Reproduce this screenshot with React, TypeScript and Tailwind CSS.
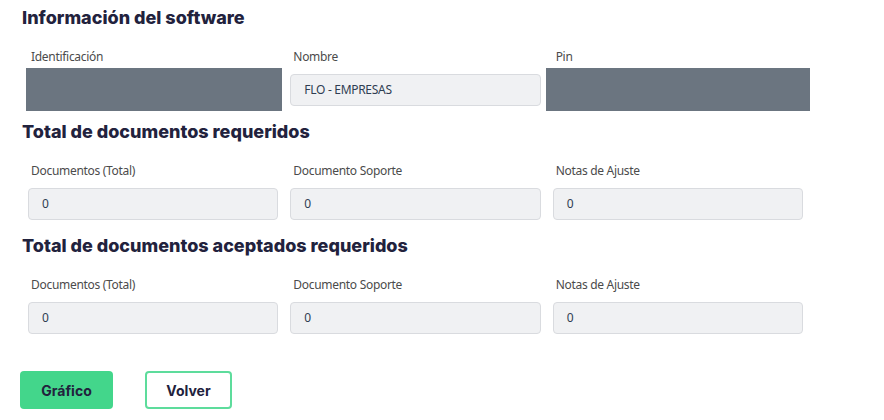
const labelCls = "block pl-[3px] pt-[2px] text-[12px] leading-[18px] tracking-[-0.3px] text-[#4b4b4b] mb-[8px]";
const inputCls =
  "h-[32px] w-full rounded-[4px] border border-[#d9dbdf] bg-[#f0f1f3] px-[13px] flex items-center text-[12px] tracking-[-0.3px] text-[#2f3d52]";

function Field({ label, value, redact }: { label: string; value?: string; redact?: "left" | "right" }) {
  return (
    <div>
      <span className={labelCls}>{label}</span>
      <div className="relative">
        <div className={inputCls}>{value}</div>
        {redact === "left" && (
          <div className="absolute left-[-2px] right-[-4px] top-[-6px] bottom-[-5px] bg-[#6b7580]" />
        )}
        {redact === "right" && (
          <div className="absolute left-[-7px] right-[-7px] top-[-6px] bottom-[-5px] bg-[#6b7580]" />
        )}
      </div>
    </div>
  );
}

function Heading({ children }: { children: string }) {
  return (
    <h2 className="text-[18px] leading-[24px] font-extrabold text-[#22223d] mb-[16px]" style={{ fontFamily: "Inter, sans-serif" }}>
      {children}
    </h2>
  );
}

export default function App() {
  return (
    <div className="w-[884px] h-[420px] bg-white pt-[6px] pl-[22px]" style={{ fontFamily: "'Noto Sans', 'Open Sans', sans-serif" }}>
      <Heading>Información del software</Heading>
      <div className="grid grid-cols-3 gap-x-3 w-[775px] ml-[6px]">
        <Field label="Identificación" redact="left" />
        <Field label="Nombre" value="FLO - EMPRESAS" />
        <Field label="Pin" redact="right" />
      </div>

      <div className="mt-[14px]">
        <Heading>Total de documentos requeridos</Heading>
        <div className="grid grid-cols-3 gap-x-3 w-[775px] ml-[6px]">
          <Field label="Documentos (Total)" value="0" />
          <Field label="Documento Soporte" value="0" />
          <Field label="Notas de Ajuste" value="0" />
        </div>
      </div>

      <div className="mt-[14px]">
        <Heading>Total de documentos aceptados requeridos</Heading>
        <div className="grid grid-cols-3 gap-x-3 w-[775px] ml-[6px]">
          <Field label="Documentos (Total)" value="0" />
          <Field label="Documento Soporte" value="0" />
          <Field label="Notas de Ajuste" value="0" />
        </div>
      </div>

      <div className="flex gap-8 mt-[37px] -ml-[2px]" style={{ fontFamily: "Inter, sans-serif" }}>
        <button className="h-[38px] w-[93px] rounded-[4px] bg-[#43d68b] text-[14px] font-bold text-[#22223d]">
          Gráfico
        </button>
        <button className="h-[38px] w-[87px] rounded-[4px] border-2 border-[#5ddc9c] bg-white text-[14px] font-bold text-[#22223d]">
          Volver
        </button>
      </div>
    </div>
  );
}
